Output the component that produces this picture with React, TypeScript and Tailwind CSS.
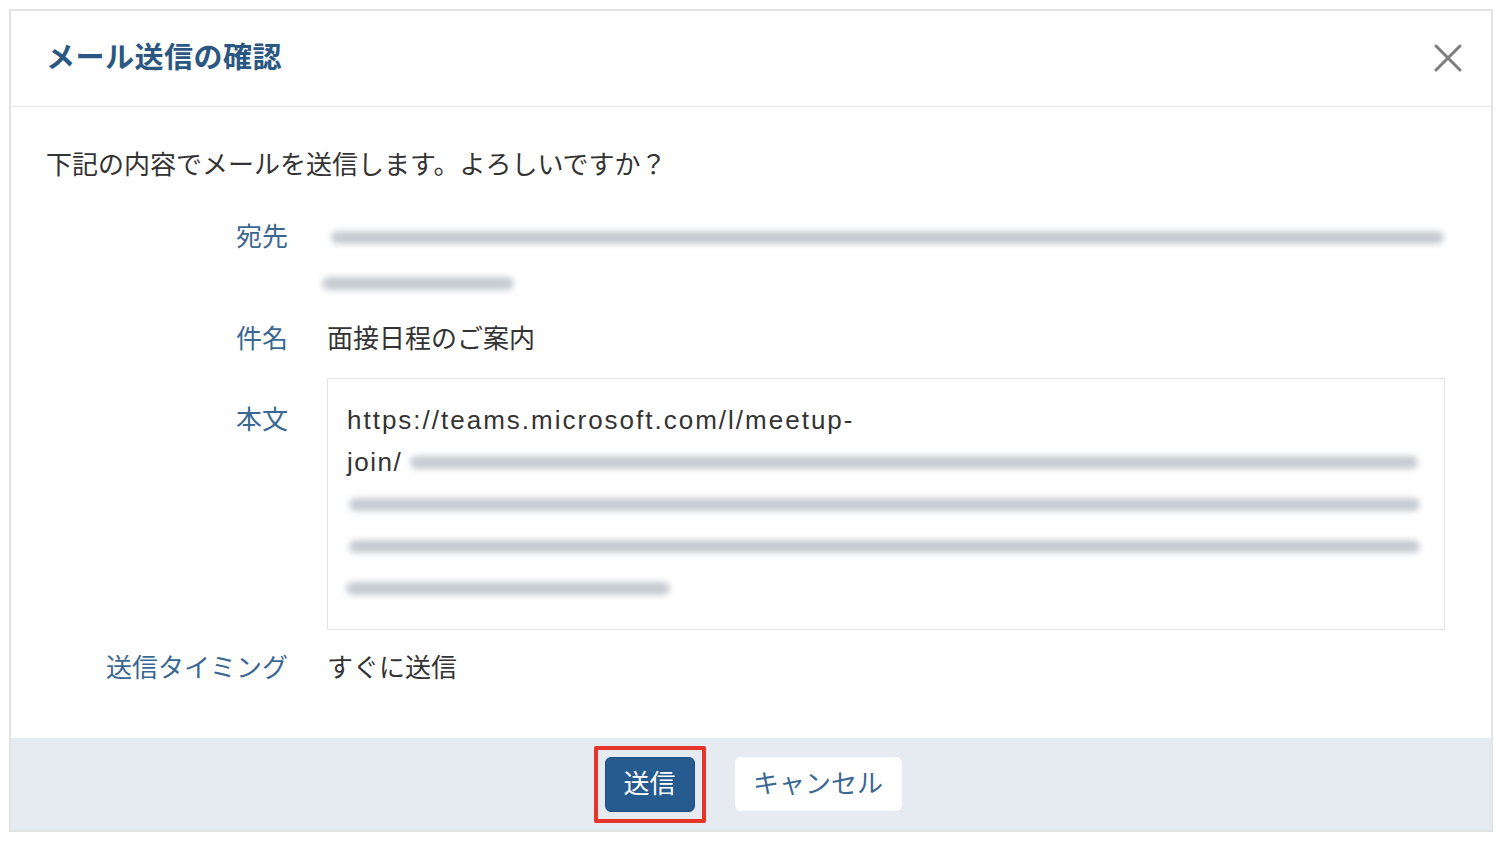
import React from 'react';

function Blur({ className }: { className: string }) {
  return <div className={`h-[13px] rounded-full bg-[#c6cbd2] blur-[3px] ${className}`} />;
}

export default function App() {
  const font = { fontFamily: '"Liberation Sans", "Noto Sans CJK JP", sans-serif' };
  return (
    <div className="min-h-[844px] w-[1504px] bg-white pt-[9px] pl-[9px]" style={font}>
      <div className="flex h-[823px] w-[1484px] flex-col border-2 border-[#e3e3e3] bg-white">
        {/* header */}
        <div className="flex h-[96px] shrink-0 items-center justify-between border-b border-[#e6e6e6] pl-[35px] pr-[29px]">
          <h1 className="text-[29px] font-bold tracking-[0.5px] text-[#2b5783]">メール送信の確認</h1>
          <svg width="28" height="28" viewBox="0 0 28 28" className="-mt-[2px]">
            <path d="M2 2 L26 26 M26 2 L2 26" stroke="#7d7d7d" strokeWidth="3" strokeLinecap="round" />
          </svg>
        </div>

        {/* body */}
        <div className="flex flex-1 flex-col pl-[35px] pr-[46px] pt-[37px] text-[26px] text-[#333]">
          <p className="leading-[42px]">下記の内容でメールを送信します。よろしいですか？</p>

          <div className="mt-[28px] grid grid-cols-[242px_1fr] gap-x-[39px]">
            <div className="text-right leading-[46px] text-[#3a6893]">宛先</div>
            <div>
              <div className="flex h-[46px] items-center">
                <Blur className="ml-[4px] w-[1113px]" />
              </div>
              <div className="flex h-[46px] items-center">
                <Blur className="-ml-[5px] w-[192px]" />
              </div>
            </div>
          </div>

          <div className="mt-[10px] grid grid-cols-[242px_1fr] gap-x-[39px]">
            <div className="text-right leading-[46px] text-[#3a6893]">件名</div>
            <div className="leading-[46px]">面接日程のご案内</div>
          </div>

          <div className="mt-[16px] grid grid-cols-[242px_1fr] gap-x-[39px]">
            <div className="pt-[21px] text-right leading-[42px] text-[#3a6893]">本文</div>
            <div className="border border-[#e3e3e3] px-[19px] py-[20px] leading-[42px]">
              <div className="tracking-[2px]">https://teams.microsoft.com/l/meetup-</div>
              <div className="flex items-center">
                <span className="tracking-[1.5px]">join/</span>
                <Blur className="ml-[8px] w-[1008px]" />
              </div>
              <div className="flex h-[42px] items-center">
                <Blur className="ml-[2px] w-[1071px]" />
              </div>
              <div className="flex h-[42px] items-center">
                <Blur className="ml-[2px] w-[1071px]" />
              </div>
              <div className="flex h-[42px] items-center">
                <Blur className="-ml-[1px] w-[324px]" />
              </div>
            </div>
          </div>

          <div className="mt-[17px] grid grid-cols-[242px_1fr] gap-x-[39px]">
            <div className="text-right leading-[42px] text-[#3a6893]">送信タイミング</div>
            <div className="leading-[42px]">すぐに送信</div>
          </div>
        </div>

        {/* footer */}
        <div className="flex h-[92px] shrink-0 items-center justify-center gap-10 bg-[#e5ebf0] pl-[4px]">
          <div className="relative">
            <button className="h-[55px] w-[90px] rounded-[6px] border border-[#1f4f80] bg-[#265b8f] text-[26px] text-white">
              送信
            </button>
            <div className="pointer-events-none absolute -inset-x-[11px] -inset-y-[11px] rounded-[2px] border-[4px] border-[#e5352a]" />
          </div>
          <button className="h-[54px] w-[167px] rounded-[6px] bg-white text-[26px] text-[#3a6893]">
            キャンセル
          </button>
        </div>
      </div>
    </div>
  );
}
